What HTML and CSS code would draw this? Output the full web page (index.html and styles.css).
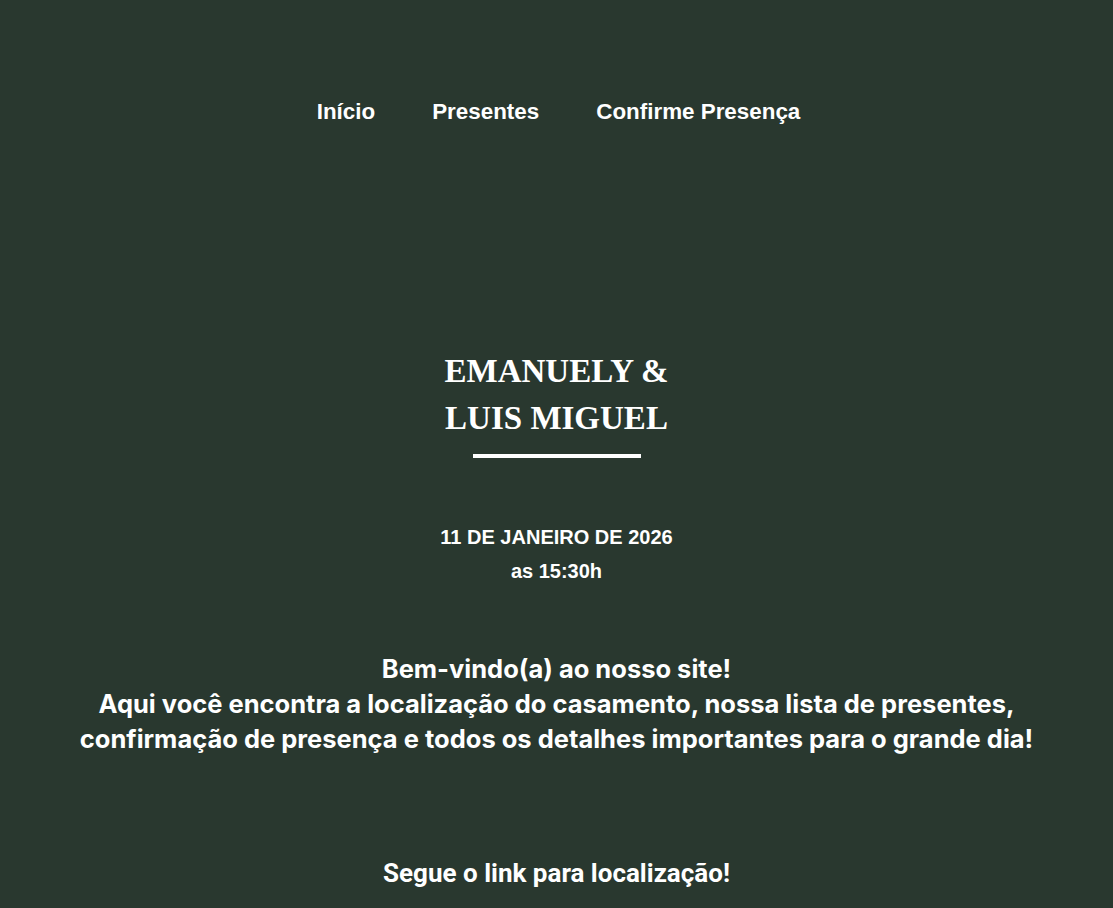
FILE: index.html
```html
<!DOCTYPE html>
<html lang="pt-BR">
<head>
<meta charset="utf-8">
<title>Emanuely & Luis Miguel</title>
<link rel="stylesheet" href="styles.css">
</head>
<body>
<header class="topbar">
  <nav class="nav">
    <a href="#" class="nav-link">Início</a>
    <a href="#" class="nav-link">Presentes</a>
    <a href="#" class="nav-link">Confirme Presença</a>
  </nav>
</header>
<main class="hero">
  <h1 class="names">EMANUELY &amp;<br>LUIS MIGUEL</h1>
  <div class="divider"></div>
  <div class="date">
    <p class="date-day">11 DE JANEIRO DE 2026</p>
    <p class="date-time">as 15:30h</p>
  </div>
  <p class="welcome">Bem-vindo(a) ao nosso site!<br>Aqui você encontra a localização do casamento, nossa lista de presentes,<br>confirmação de presença e todos os detalhes importantes para o grande dia!</p>
  <p class="location">Segue o link para localização!</p>
</main>
</body>
</html>
```
FILE: styles.css
```css
html, body {
  margin: 0;
  padding: 0;
  background: #29382f;
  color: #ffffff;
}
body {
  font-family: "Liberation Sans", Arial, sans-serif;
  height: 908px;
  overflow: hidden;
}
.topbar {
  padding-top: 98px;
  display: flex;
  justify-content: center;
}
.nav {
  display: flex;
  gap: 57px;
  margin-left: 4px;
}
.nav-link {
  color: #ffffff;
  text-decoration: none;
  font-weight: bold;
  font-size: 22.4px;
  line-height: 28px;
}
.hero {
  display: flex;
  flex-direction: column;
  align-items: center;
  text-align: center;
  padding-top: 222px;
}
.names {
  margin: 0;
  font-family: "Liberation Serif", "Times New Roman", serif;
  font-weight: bold;
  font-size: 33px;
  line-height: 47px;
  letter-spacing: 0;
}
.divider {
  width: 168px;
  height: 4px;
  background: #ffffff;
  margin-top: 12px;
}
.date {
  margin-top: 62px;
}
.date p {
  margin: 0;
  font-weight: bold;
  font-size: 20px;
  line-height: 34px;
}
.welcome {
  margin: 63px 0 0;
  font-family: Inter, Roboto, "Liberation Sans", sans-serif;
  font-weight: 700;
  font-size: 25.5px;
  line-height: 35px;
}
.location {
  margin: 100px 0 0;
  font-family: Roboto, "Liberation Sans", sans-serif;
  font-weight: 700;
  font-size: 26px;
  line-height: 35px;
}
```
